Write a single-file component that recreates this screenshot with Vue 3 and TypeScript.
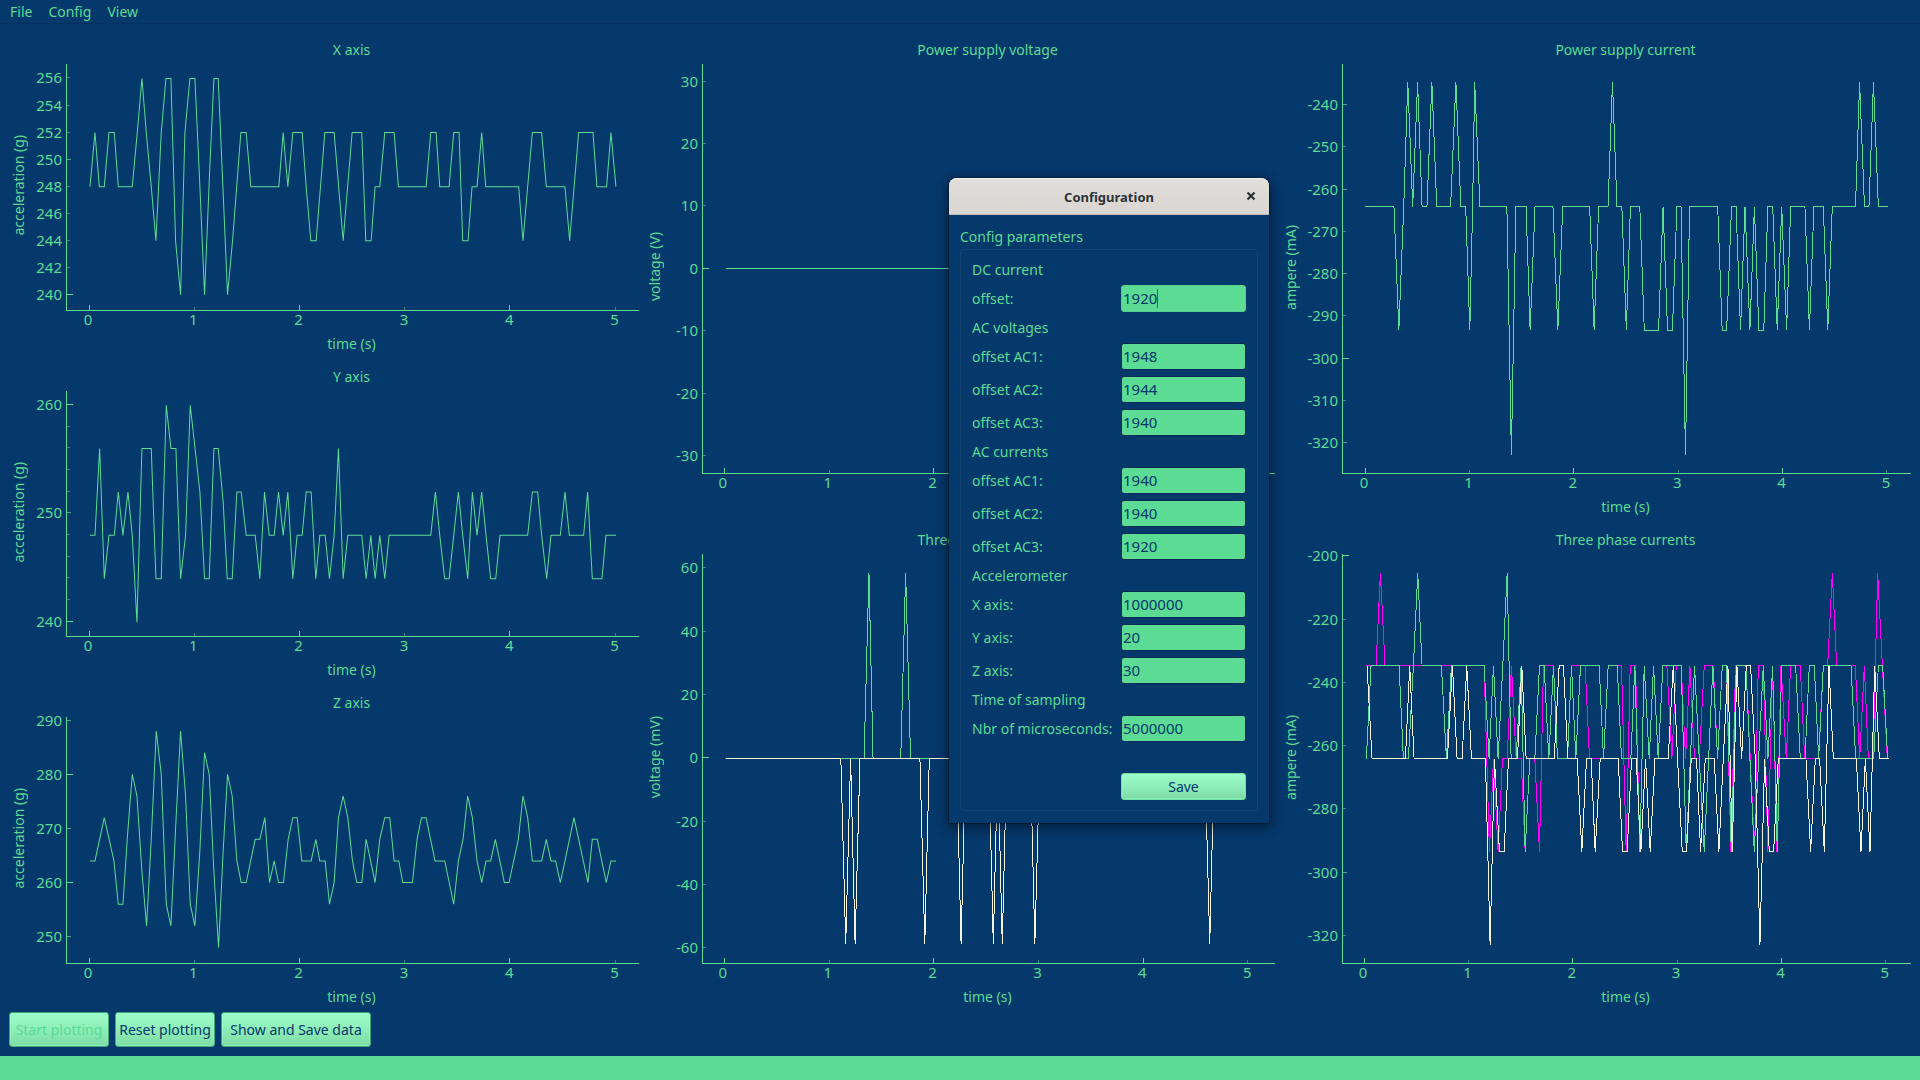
<script setup lang="ts">
import { ref } from 'vue'

type Chunk = [zero: number, samples: string]

interface Trace {
  color: string
  chunks: Chunk[]
}

interface Tick {
  at: number
  label: string
  size: 'major' | 'medium' | 'minor'
}

interface Chart {
  title: string
  yLabel: string
  rate: number
  x: [number, number]
  y: [number, number]
  yTicks: Tick[]
  traces: Trace[]
}

const GREEN = '#5cdb95'
const BEIGE = '#f5f5dc'
const MAGENTA = '#ff00ff'

// Quantised current levels in mA
const LEVELS: Record<string, number> = { P: -205.3, H: -234.6, M: -264, L: -293.3, B: -322.7 }

function ticks(values: number[], major: number[], medium: number[] = [], bare: number[] = []): Tick[] {
  return [...values, ...bare].map((at) => ({
    at,
    label: bare.includes(at) ? '' : String(at),
    size: major.includes(at) ? 'major' : medium.includes(at) ? 'medium' : 'minor',
  }))
}

const xTicks = ticks([0, 1, 2, 3, 4, 5], [0, 2, 4])

const columns: Chart[][] = [
  [
    {
      title: 'X axis',
      yLabel: 'acceleration (g)',
      rate: 315.6,
      x: [-0.209, 5.232],
      y: [238.9, 257.07],
      yTicks: ticks([256, 254, 252, 250, 248, 246, 244, 242, 240], [240], [250]),
      traces: [
        {
          color: GREEN,
          chunks: [
            [265, '268 248 283 252 296 248 311 248 325 252 341 252 353 248 395 248 410 252 424 256 437 252 452 248 466 244 482 252 496 256 511 256 525 244 540 240 553 252 568 256 583 256 598 248 612 240 627 249 640 256 653 256 667 248 681 240 696 244 721 252 737 252 751 248 835 248 848 252 862 248 877 252 905 252 917 248 931 244 947 244 973 252'],
            [-695, '13 252 41 252 68 244 95 252 124 252 136 244 152 244 164 248 178 248 193 252 221 252 234 248 317 248 331 252 347 252 358 248 386 248 400 252 416 252 427 244 443 244 455 248 470 248 484 252 496 248 595 248 608 244 636 252 664 252 678 248 734 248 748 244 775 252 818 252 830 248 859 248 872 252 887 248'],
          ],
        },
      ],
    },
    {
      title: 'Y axis',
      yLabel: 'acceleration (g)',
      rate: 315.6,
      x: [-0.209, 5.232],
      y: [238.66, 261.31],
      yTicks: ticks([260, 250, 240], [260, 240], [250], [258, 256, 254, 252, 248, 246, 244, 242]),
      traces: [
        {
          color: GREEN,
          chunks: [
            [265, '268 248 283 248 297 256 311 244 325 248 341 248 353 252 367 248 382 252 395 248 409 240 424 256 452 256 466 244 482 244 497 260 511 256 526 256 540 244 555 248 569 260 598 252 612 244 626 244 640 256 653 256 668 251 680 244 695 244 709 252 722 252 737 248 764 248 778 244 792 252 806 248 821 248 834 252 848 248 862 252 877 244 890 248 905 248 917 252 932 252 946 244 958 248 974 248 987 244 1001 248 1014 256'],
            [-695, '68 244 82 248 124 248 137 244 151 248 164 244 178 248 193 244 206 248 331 248 345 252 358 248 373 244 386 244 400 248 414 252 427 248 442 244 456 252 470 248 484 252 497 248 511 244 526 244 539 248 622 248 636 252 652 252 664 248 679 244 692 248 720 248 734 252 747 248 790 248 802 252 816 244 845 244 857 248 887 248'],
          ],
        },
      ],
    },
    {
      title: 'Z axis',
      yLabel: 'acceleration (g)',
      rate: 315.6,
      x: [-0.209, 5.232],
      y: [245.2, 290.6],
      yTicks: ticks([290, 280, 270, 260, 250], [280, 260], [290, 270, 250]),
      traces: [
        {
          color: GREEN,
          chunks: [
            [265, '268 264 283 264 311 272 340 264 353 256 367 256 381 269 395 280 409 276 424 262 438 252 452 268 467 288 482 280 497 256 511 252 525 270 540 288 555 276 569 256 583 252 598 266 612 284 626 280 640 262 654 248 668 266 681 280 695 276 709 264 722 260 737 260 764 268 778 268 793 272 807 260 821 264 834 260 849 260 863 268 877 272 890 272 904 264 932 264 946 268 958 264 974 264 987 256 1001 260 1014 272'],
            [-695, '68 276 82 272 96 264 109 260 124 260 137 268 164 260 178 268 193 272 208 272 221 264 235 264 247 260 276 260 290 268 303 272 317 272 344 264 373 264 400 256 414 264 428 268 442 276 456 272 470 264 484 260 497 264 511 264 525 268 552 260 566 260 594 268 608 276 622 272 636 264 664 264 678 268 692 264 706 264 720 260 734 264 761 272 803 260 816 268 831 268 858 260 872 264 887 264'],
          ],
        },
      ],
    },
  ],
  [
    {
      title: 'Power supply voltage',
      yLabel: 'voltage (V)',
      rate: 256.8,
      x: [-0.199, 5.265],
      y: [-32.75, 32.84],
      yTicks: ticks([30, 20, 10, 0, -10, -20, -30], [0]),
      traces: [{ color: GREEN, chunks: [[204, '209 0 1490 0']] }],
    },
    {
      title: 'Three phase voltages',
      yLabel: 'voltage (mV)',
      rate: 256.8,
      x: [-0.199, 5.265],
      y: [-64.7, 64.5],
      yTicks: ticks([60, 40, 20, 0, -20, -40, -60], [0]),
      traces: [
        { color: MAGENTA, chunks: [[204, '207 0 210 0']] },
        { color: GREEN, chunks: [[204, '209 0 548 0 560 58.6 570 0 638 0 650 58.6 662 0 1490 0']] },
        {
          color: BEIGE,
          chunks: [[204, '209 0 491 0 503 -58.6 515 0 526 -58.6 538 0 685 0 697 -58.6 708 0 775 0 786 -58.6 797 0 854 0 865 -58.6 876 0 887 -58.6 898 0 956 0 967 -58.6 979 0 1384 0 1396 -58.6 1407 0 1490 0']],
        },
      ],
    },
  ],
  [
    {
      title: 'Power supply current',
      yLabel: 'ampere (mA)',
      rate: 255.6,
      x: [-0.211, 5.239],
      y: [-327.08, -230.24],
      yTicks: ticks([-240, -250, -260, -270, -280, -290, -300, -310, -320], [-300], [-240, -260, -280, -320]),
      traces: [
        {
          color: GREEN,
          chunks: [[207, '208 M 278 M 290 L 302 M 312 H 324 M 336 H 347 M 359 M 371 H 383 M 417 M 430 H 442 M 454 M 464 L 471 M 476 H 489 M 555 M 566 B 577 M 602 M 612 L 624 M 668 M 680 L 692 M 758 M 769 L 780 M 803 M 814 H 825 M 837 M 848 L 858 M 881 M 892 L 927 L 938 M 949 L 961 L 972 M 982 M 993 B 1003 M 1072 M 1083 L 1094 L 1106 M 1117 M 1128 L 1139 M 1151 L 1162 M 1173 L 1185 L 1195 M 1207 M 1218 L 1229 M 1241 L 1251 M 1286 M 1297 L 1308 M 1331 M 1342 L 1353 M 1410 M 1420 H 1432 M 1443 M 1454 H 1466 M 1490 M']],
        },
      ],
    },
    {
      title: 'Three phase currents',
      yLabel: 'ampere (mA)',
      rate: 312.3,
      x: [-0.202, 5.251],
      y: [-328.5, -199.3],
      yTicks: ticks([-200, -220, -240, -260, -280, -300, -320], [-200], [-300]),
      traces: [
        {
          color: MAGENTA,
          chunks: [
            [250, '257 H 286 H 299 P 313 H 610 H 618 M 626 L 638 M 652 L 665 M 679 M 692 H 706 M 721 M 733 L 747 M 762 M 776 L 788 H 818 H 830 M 860 M 872 H 913 H 926 M 968 M 982 H'],
            [-680, '92 H 106 L 118 H 134 H 147 L 160 H 175 M 188 H 202 M 216 H 228 H 243 M 256 H 271 H 284 M 297 H 311 M 325 M 340 H 367 H 380 M 394 H 406 H 420 L 434 H 465 H 491 L 502 H 517 H 531 L 545 H 558 L 570 H 586 M 599 H 628 H 641 M 682 M 697 H 710 H 724 P 737 H 793 H 806 M 820 H 832 M 846 M 860 P 874 H 889 M'],
          ],
        },
        {
          color: GREEN,
          chunks: [
            [250, '257 M 271 H 355 H 368 M 383 M 398 H 411 P 424 H 482 H 497 M 512 H 610 H 625 M 638 H 652 M 666 H 679 P 691 M 706 M 721 H 733 L 747 M 762 M 776 H 790 H 804 M 818 H 830 M 860 M 872 H 885 M 899 H 955 H 968 M 982 H'],
            [-680, '79 H 92 M 120 M 132 H 147 L 160 H 175 M 188 H 202 M 216 H 271 H 286 L 311 H 325 M 340 L 353 M 366 H 380 M 394 H 407 H 421 L 436 H 465 H 477 M 490 L 503 M 517 H 531 M 545 H 559 L 572 H 614 H 628 M 642 M 655 H 670 H 683 M 697 H 780 H 794 M 848 M 862 H 875 H 890 M'],
          ],
        },
        {
          color: BEIGE,
          chunks: [
            [250, '259 H 274 M 374 M 387 H 400 M 500 M 515 H 529 M 544 M 558 H 572 M 614 M 628 B 641 M 656 L 670 L 683 M 710 M 723 H 736 M 820 M 835 H 848 H 861 M 889 M 903 L 917 M 931 M 943 L 958 M'],
            [-680, '82 M 95 L 109 L 122 M 136 M 150 L 164 M 178 L 192 M 232 M 247 H 260 M 274 L 287 L 301 M 317 M 329 L 343 M 370 M 384 L 397 M 411 H 424 L 438 H 452 M 466 H 479 H 493 M 507 B 521 M 535 L 548 L 562 M 645 M 659 L 673 M 686 M 700 L 714 H 727 M 796 M 810 L 823 M 837 L 851 H 865 M 893 M'],
          ],
        },
      ],
    },
  ],
]

function percent(value: number, [low, high]: [number, number]): number {
  return ((value - low) / (high - low)) * 100
}

function polyline(chart: Chart, trace: Trace): string {
  const points: string[] = []
  for (const [zero, samples] of trace.chunks) {
    const tokens = samples.split(' ')
    for (let i = 0; i < tokens.length; i += 2) {
      const time = (Number(tokens[i]) - zero) / chart.rate
      const value = LEVELS[tokens[i + 1]] ?? Number(tokens[i + 1])
      const px = percent(time, chart.x) * 10
      const py = 1000 - percent(value, chart.y) * 10
      points.push(`${px.toFixed(2)},${py.toFixed(2)}`)
    }
  }
  return points.join(' ')
}

interface Field {
  id: string
  label: string
  value: string
}

const groups = ref<{ title: string; fields: Field[] }[]>([
  { title: 'DC current', fields: [{ id: 'dc', label: 'offset:', value: '1920' }] },
  {
    title: 'AC voltages',
    fields: [
      { id: 'v1', label: 'offset AC1:', value: '1948' },
      { id: 'v2', label: 'offset AC2:', value: '1944' },
      { id: 'v3', label: 'offset AC3:', value: '1940' },
    ],
  },
  {
    title: 'AC currents',
    fields: [
      { id: 'c1', label: 'offset AC1:', value: '1940' },
      { id: 'c2', label: 'offset AC2:', value: '1940' },
      { id: 'c3', label: 'offset AC3:', value: '1920' },
    ],
  },
  {
    title: 'Accelerometer',
    fields: [
      { id: 'ax', label: 'X axis:', value: '1000000' },
      { id: 'ay', label: 'Y axis:', value: '20' },
      { id: 'az', label: 'Z axis:', value: '30' },
    ],
  },
  { title: 'Time of sampling', fields: [{ id: 'time', label: 'Nbr of microseconds:', value: '5000000' }] },
])

const active = ref('dc')
</script>

<template>
  <div class="app">
    <nav class="menubar">
      <button type="button">File</button>
      <button type="button">Config</button>
      <button type="button">View</button>
    </nav>

    <main class="charts">
      <div v-for="(column, c) in columns" :key="c" class="column" :class="{ wide: c === 2 }">
        <section v-for="chart in column" :key="chart.title" class="chart">
          <h2 class="title">{{ chart.title }}</h2>
          <div class="y-label">{{ chart.yLabel }}</div>
          <div class="y-values">
            <template v-for="t in chart.yTicks" :key="t.at">
              <span v-if="t.label" :style="{ bottom: percent(t.at, chart.y) + '%' }">{{ t.label }}</span>
            </template>
          </div>
          <div class="plot">
            <svg viewBox="0 0 1000 1000" preserveAspectRatio="none" aria-hidden="true">
              <polyline
                v-for="(trace, n) in chart.traces"
                :key="n"
                :points="polyline(chart, trace)"
                :stroke="trace.color"
              />
            </svg>
            <i
              v-for="t in chart.yTicks"
              :key="'y' + t.at"
              class="tick y"
              :class="t.size"
              :style="{ bottom: percent(t.at, chart.y) + '%' }"
            ></i>
            <i
              v-for="t in xTicks"
              :key="'x' + t.at"
              class="tick x"
              :class="t.size"
              :style="{ left: percent(t.at, chart.x) + '%' }"
            ></i>
          </div>
          <div class="x-values">
            <span v-for="t in xTicks" :key="t.at" :style="{ left: percent(t.at, chart.x) + '%' }">{{ t.label }}</span>
          </div>
          <div class="x-label">time (s)</div>
        </section>
      </div>
    </main>

    <div class="toolbar">
      <button type="button" class="btn" disabled>Start plotting</button>
      <button type="button" class="btn">Reset plotting</button>
      <button type="button" class="btn large">Show and Save data</button>
    </div>
    <footer class="statusbar"></footer>

    <div class="dialog" role="dialog" aria-labelledby="dialog-title">
      <header class="dialog-bar">
        <h1 id="dialog-title">Configuration</h1>
        <button type="button" class="close" aria-label="Close">
          <svg viewBox="0 0 10 10" width="10" height="10">
            <path d="M1.5 1.5 L8.5 8.5 M8.5 1.5 L1.5 8.5" />
          </svg>
        </button>
      </header>
      <form class="dialog-body" @submit.prevent>
        <h2>Config parameters</h2>
        <div class="frame">
          <template v-for="group in groups" :key="group.title">
            <h3>{{ group.title }}</h3>
            <template v-for="field in group.fields" :key="field.id">
              <label :for="field.id">{{ field.label }}</label>
              <div class="field" :class="{ active: field.id === active }">
                <input :id="field.id" v-model="field.value" type="text" @focus="active = field.id" />
                <i v-if="field.id === active" class="caret"></i>
              </div>
            </template>
          </template>
          <button type="submit" class="btn save">Save</button>
        </div>
      </form>
    </div>
  </div>
</template>

<style>
body {
  margin: 0;
  background: #05386b;
}
</style>

<style scoped>
.app {
  position: relative;
  display: flex;
  flex-direction: column;
  min-height: 100vh;
  background: #05386b;
  color: #5cdb95;
  font-family: 'Noto Sans', 'Open Sans', sans-serif;
  font-size: 14px;
  line-height: 20px;
}
.app * {
  box-sizing: border-box;
}
h1,
h2,
h3 {
  margin: 0;
  font-size: 14px;
  font-weight: 400;
}
button {
  font: inherit;
  margin: 0;
}
.menubar {
  display: flex;
  height: 24px;
  padding-left: 2px;
  border-bottom: 1px solid #043160;
}
.menubar button {
  padding: 0 8px;
  border: 0;
  background: none;
  color: inherit;
}
.charts {
  flex: 1;
  display: grid;
  grid-template-columns: repeat(3, 1fr);
  padding: 6px 3px 0 9px;
}
.column {
  --values: 37px;
  display: flex;
  flex-direction: column;
}
.column.wide {
  --values: 41px;
}
.chart {
  flex: 1;
  display: grid;
  grid-template-columns: 20px var(--values) 1fr;
  grid-template-rows: 20px 1fr 20px 20px;
  padding: 10px 6px 6px 0;
}
.title,
.x-label {
  grid-column: 3;
  padding-right: 2px;
  text-align: center;
}
.x-label {
  padding-top: 3px;
}
.y-label {
  grid-column: 1;
  justify-self: center;
  align-self: center;
  writing-mode: vertical-rl;
  transform: rotate(180deg);
  white-space: nowrap;
}
.y-values,
.x-values {
  position: relative;
  font-size: 15px;
}
.y-values {
  margin: 3px 0 2px;
}
.y-values span {
  position: absolute;
  right: 4px;
  transform: translateY(50%);
}
.x-values {
  grid-column: 3;
  line-height: 16px;
}
.x-values span {
  position: absolute;
  transform: translateX(-50%);
}
.plot {
  position: relative;
  min-height: 120px;
  margin-top: 4px;
  border-left: 1px solid #5cdb95;
  border-bottom: 1px solid #5cdb95;
}
.plot svg {
  position: absolute;
  width: 100%;
  height: 100%;
}
.plot polyline {
  fill: none;
  stroke-width: 1px;
  vector-effect: non-scaling-stroke;
  shape-rendering: crispEdges;
}
.tick {
  position: absolute;
  background: #5cdb95;
}
.tick.y {
  left: 0;
  width: 3px;
  height: 1px;
}
.tick.x {
  bottom: 0;
  width: 1px;
  height: 3px;
}
.tick.minor {
  opacity: 0.5;
}
.tick.y.medium {
  width: 4px;
  opacity: 0.7;
}
.tick.y.major {
  width: 6px;
}
.tick.x.major {
  height: 5px;
}
.toolbar {
  display: flex;
  gap: 6px;
  padding: 2px 9px 9px;
}
.btn {
  width: 100px;
  height: 35px;
  padding: 0;
  border: 1px solid #3fa878;
  border-radius: 3px;
  background: linear-gradient(#9dffca, #7edca6);
  box-shadow: inset 0 0 0 1px rgba(160, 255, 205, 0.35);
  color: #05386b;
  white-space: nowrap;
}
.btn.large {
  width: 150px;
}
.btn:disabled {
  color: #5cdb95;
}
.statusbar {
  height: 24px;
  background: #5cdb95;
}
.dialog {
  position: absolute;
  top: 178px;
  left: calc(50% - 11px);
  width: 320px;
  border-radius: 8px 8px 0 0;
  background: #05386b;
  box-shadow:
    0 3px 12px 2px rgba(0, 0, 0, 0.45),
    0 0 0 1px rgba(0, 0, 0, 0.25);
}
.dialog-bar {
  position: relative;
  height: 37px;
  border-bottom: 1px solid #bfb8b1;
  border-radius: 8px 8px 0 0;
  background: linear-gradient(#e1dedb, #dad6d2);
  box-shadow: inset 0 1px #f4f2f1;
  color: #2e3436;
}
.dialog-bar h1 {
  font-size: 13px;
  font-weight: 700;
  line-height: 38px;
  text-align: center;
}
.close {
  position: absolute;
  top: 8px;
  right: 8px;
  display: flex;
  align-items: center;
  justify-content: center;
  width: 20px;
  height: 20px;
  padding: 0;
  border: 0;
  background: none;
}
.close path {
  fill: none;
  stroke: #2e3436;
  stroke-width: 2.2;
}
.dialog-body {
  padding: 12px 11px;
}
.dialog-body h2 {
  height: 22px;
}
.frame {
  display: grid;
  grid-template-columns: 1fr 125px;
  gap: 6px;
  padding: 10px 11px;
  border: 1px solid #15436f;
  border-radius: 3px;
}
.frame h3 {
  grid-column: 1 / -1;
  height: 19px;
  line-height: 19px;
}
.frame label {
  line-height: 27px;
  white-space: nowrap;
}
.field {
  position: relative;
  height: 27px;
}
.field input {
  display: block;
  width: 100%;
  height: 27px;
  padding: 0 1px 2px;
  border: 1px solid #042c55;
  border-radius: 3px;
  outline: none;
  background: #5cdb95;
  color: #05386b;
  caret-color: transparent;
  font: inherit;
  font-size: 15px;
}
.field.active input {
  border-color: #55d08f;
}
.caret {
  position: absolute;
  top: 4px;
  left: 36px;
  width: 1px;
  height: 19px;
  background: #8a3a62;
}
.save {
  grid-column: 2;
  width: 125px;
  height: 27px;
  margin-top: 25px;
  border-color: #6fe0a4;
}
</style>
